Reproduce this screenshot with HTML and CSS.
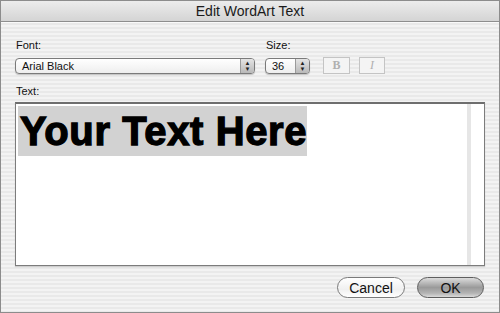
FILE: index.html
```html
<!DOCTYPE html>
<html lang="en">
<head>
<meta charset="utf-8"/>
<title>Edit WordArt Text</title>
<link rel="stylesheet" href="styles.css">
</head>
<body>
<div class="window">
  <div class="titlebar">Edit WordArt Text</div>
  <div class="controls">
    <div class="field font-field">
      <label>Font:</label>
      <div class="popup">
        <span class="popup-value">Arial Black</span>
        <span class="stepper"><i>&#9650;</i><i>&#9660;</i></span>
      </div>
    </div>
    <div class="field size-field">
      <label>Size:</label>
      <div class="popup">
        <span class="popup-value">36</span>
        <span class="stepper"><i>&#9650;</i><i>&#9660;</i></span>
      </div>
    </div>
    <div class="style-btn bold">B</div>
    <div class="style-btn italic">I</div>
  </div>
  <label class="text-label">Text:</label>
  <div class="text-box">
    <div class="text-area"><span class="wordart">Your Text Here</span></div>
    <div class="scroll"></div>
  </div>
  <div class="actions">
    <button class="pill cancel">Cancel</button>
    <button class="pill ok">OK</button>
  </div>
</div>
</body>
</html>
```

FILE: styles.css
```css
body {
  margin: 0;
  font-family: 'Liberation Sans', Arial, sans-serif;
  color: #111;
}
.window {
  box-sizing: border-box;
  width: 500px;
  height: 313px;
  border: 1px solid #8c8c8c;
  background: repeating-linear-gradient(to bottom, #f3f3f3 0, #f3f3f3 2px, #e9e9e9 2px, #e9e9e9 4px);
}
.titlebar {
  height: 20px;
  line-height: 20px;
  text-align: center;
  font-size: 14px;
  color: #1a1a1a;
  background: linear-gradient(to bottom, #ececec, #d4d4d4);
  border-bottom: 1px solid #8e8e8e;
  box-shadow: 0 1px 0 #fafafa;
}
.controls {
  display: flex;
  align-items: flex-end;
  margin-top: 16px;
  padding-left: 14px;
}
.field label {
  display: block;
  font-size: 11px;
  line-height: 14px;
  margin: 0 0 6px 1px;
}
.font-field { width: 240px; }
.size-field { width: 45px; margin-left: 10px; }
.popup {
  display: flex;
  box-sizing: border-box;
  height: 16px;
  border: 1px solid #7a7a7a;
  border-radius: 4px;
  background: linear-gradient(to bottom, #ffffff, #eeeeee);
  box-shadow: 0 1px 1px rgba(0,0,0,0.2);
  overflow: hidden;
}
.popup-value {
  flex: 1;
  font-size: 11px;
  line-height: 14px;
  padding-left: 6px;
}
.stepper {
  display: flex;
  flex-direction: column;
  align-items: center;
  justify-content: center;
  gap: 1px;
  width: 13px;
  border-left: 1px solid #9a9a9a;
  background: linear-gradient(to bottom, #e4e4e4, #b9b9b9);
}
.stepper i {
  font-style: normal;
  font-size: 6px;
  line-height: 5px;
  color: #222;
}
.style-btn {
  box-sizing: border-box;
  width: 27px;
  height: 17px;
  margin-left: 13px;
  border: 1px solid #c4c4c4;
  background: #f4f4f4;
  color: #b0b0b0;
  text-align: center;
  font-size: 12px;
  line-height: 15px;
}
.bold { font-family: 'Liberation Serif', serif; font-weight: bold; }
.italic { width: 26px; margin-left: 9px; font-family: 'Liberation Serif', serif; font-style: italic; }
.text-label {
  display: block;
  font-size: 11px;
  line-height: 14px;
  margin: 10px 0 4px 15px;
}
.text-box {
  display: flex;
  box-sizing: border-box;
  width: 470px;
  height: 164px;
  margin-left: 14px;
  border: 1px solid #7c7c7c;
  border-top: 2px solid #6e6e6e;
  background: #fff;
  box-shadow: 0 1px 1px rgba(0,0,0,0.15);
}
.text-area {
  flex: 1;
  padding: 2px 0 0 2px;
}
.wordart {
  display: inline-block;
  background: #d2d2d2;
  font-family: 'Liberation Sans', Arial, sans-serif;
  font-weight: 900;
  font-size: 40px;
  line-height: 50px;
  padding-left: 2px;
  letter-spacing: 0.6px;
  -webkit-text-stroke: 1.3px #000;
  color: #000;
}
.scroll {
  width: 13px;
  border-left: 4px solid #e6e6e6;
  background: #fff;
}
.actions {
  display: flex;
  justify-content: flex-end;
  gap: 12px;
  margin-top: 11px;
  padding-right: 15px;
}
.pill {
  box-sizing: border-box;
  height: 21px;
  border-radius: 11px;
  font-family: 'Liberation Sans', Arial, sans-serif;
  font-size: 14px;
  color: #111;
  padding: 0;
}
.cancel {
  width: 68px;
  border: 1px solid #7a7a7a;
  background: linear-gradient(to bottom, #ffffff, #f0f0f0 60%, #ffffff);
}
.ok {
  width: 67px;
  border: 1px solid #5e5e5e;
  background: linear-gradient(to bottom, #dcdcdc, #9a9a9a 50%, #b4b4b4 80%, #dadada);
}
```
